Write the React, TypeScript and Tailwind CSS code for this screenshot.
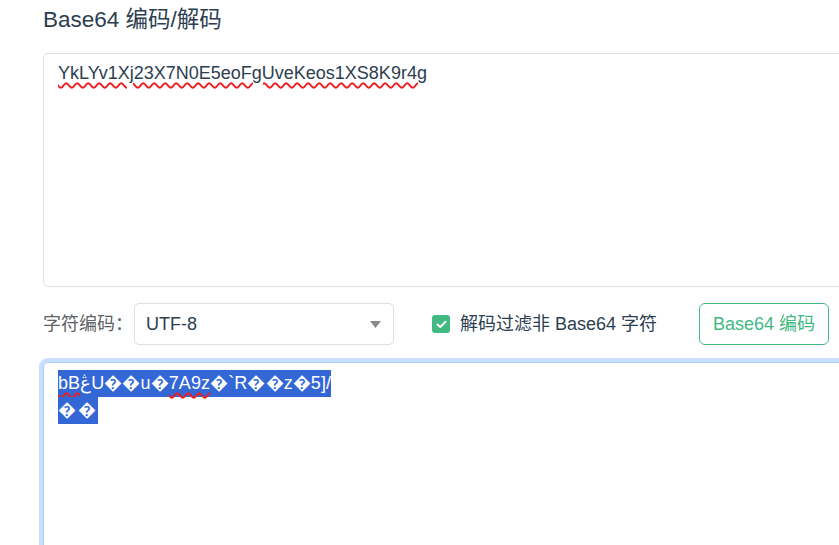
import React from 'react';

const font = { fontFamily: '"Liberation Sans", Arial, "Noto Sans CJK SC", sans-serif' };

const Wavy = ({ children }: { children: React.ReactNode }) => (
  <span className="underline decoration-wavy decoration-[#ee1c1c] decoration-[1.5px] underline-offset-[3px]">{children}</span>
);

export default function App() {
  return (
    <div className="w-[839px] h-[545px] overflow-hidden bg-white text-[#2c3e50]" style={font}>
      <div className="pl-[43px] w-[1000px]">
        <h1 className="pt-[5px] text-[22.5px] leading-[30px] font-normal text-[#2c3e50]">Base64 编码/解码</h1>

        {/* input */}
        <div className="mt-[18px] h-[234px] border border-[#dcdfe6] rounded-[5px] pl-[14px] pt-[6px] text-[18px] leading-[27px] text-[#2c3e50]">
          <Wavy>YkLYv1Xj23X7N0E5eoFgUveKeos1XS8K9r4g</Wavy>
        </div>

        {/* options row */}
        <div className="mt-[16px] h-[42px] flex items-center">
          <span className="text-[18px] text-[#606266] w-[91px]">字符编码：</span>
          <div className="w-[260px] h-[42px] border border-[#dcdfe6] rounded-[5px] flex items-center justify-between pl-[11px] pr-[12px]">
            <span className="text-[18px] text-[#2c3e50]">UTF-8</span>
            <svg width="11" height="7" viewBox="0 0 11 7">
              <path d="M0 0 L11 0 L5.5 7 Z" fill="#8a8a8a" />
            </svg>
          </div>
          <label className="ml-[38px] flex items-center">
            <span className="w-[18px] h-[18px] rounded-[3px] bg-[#42b983] flex items-center justify-center">
              <svg width="11" height="9" viewBox="0 0 11 9">
                <path d="M1.5 4.6 L4.2 7 L9.5 1.8" stroke="#fff" strokeWidth="2" fill="none" strokeLinecap="round" strokeLinejoin="round" />
              </svg>
            </span>
            <span className="ml-[10px] text-[18px] text-[#2c3e50]">解码过滤非 Base64 字符</span>
          </label>
          <button className="ml-[42px] w-[130px] h-[42px] border border-[#42b983] rounded-[6px] text-[18px] text-[#42b983] bg-white">
            Base64 编码
          </button>
        </div>

        {/* output */}
        <div className="mt-[17px] h-[300px] border border-[#a9c8fb] rounded-[5px] shadow-[0_0_0_4px_#c9ddff] pl-[14px] pt-[7px] text-[18px] leading-[27px]">
          <div className="h-[27px]">
            <span className="inline-block h-[27px] bg-[#3367d6] text-white tracking-[0.1px]">
              <Wavy>bB</Wavy>ڠU��u�<Wavy>7A9z</Wavy>�`R��z�5]/
            </span>
          </div>
          <div className="h-[27px]">
            <span className="inline-block h-[27px] bg-[#3367d6] text-white tracking-[2px]">��</span>
          </div>
        </div>
      </div>
    </div>
  );
}
